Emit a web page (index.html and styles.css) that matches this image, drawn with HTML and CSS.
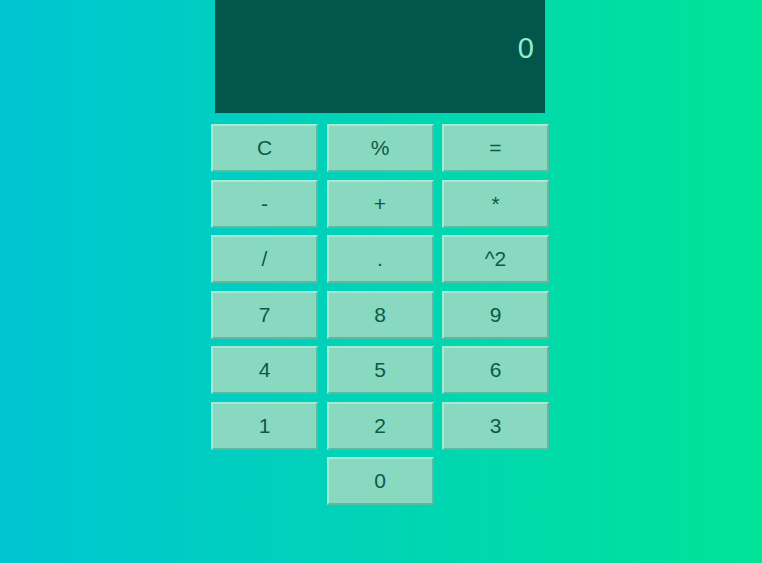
FILE: index.html
```html
<!DOCTYPE html>
<html>
<head>
<meta charset="utf-8">
<link rel="stylesheet" href="styles.css">
</head>
<body>
<div class="calc">
  <div class="display">0</div>
  <div class="keys">
    <button class="key">C</button>
    <button class="key">%</button>
    <button class="key">=</button>
    <button class="key">-</button>
    <button class="key">+</button>
    <button class="key">*</button>
    <button class="key">/</button>
    <button class="key">.</button>
    <button class="key">^2</button>
    <button class="key">7</button>
    <button class="key">8</button>
    <button class="key">9</button>
    <button class="key">4</button>
    <button class="key">5</button>
    <button class="key">6</button>
    <button class="key">1</button>
    <button class="key">2</button>
    <button class="key">3</button>
    <button class="key zero">0</button>
  </div>
</div>
</body>
</html>
```
FILE: styles.css
```css
html, body {
  margin: 0;
  padding: 0;
  height: 100%;
}
body {
  background: linear-gradient(to right, #00c5d2, #00e398);
  font-family: "Liberation Sans", Arial, sans-serif;
}
.calc {
  width: 338px;
  margin-left: calc(50% - 170px);
}
.display {
  margin: 0 4px;
  height: 113px;
  background: #03574a;
  color: #8ff0cf;
  font-size: 29px;
  text-align: right;
  box-sizing: border-box;
  padding: 30px 11px 0 0;
  line-height: 36px;
}
.keys {
  margin-top: 11px;
  display: grid;
  grid-template-columns: repeat(3, 107px);
  column-gap: 8.5px;
  row-gap: 7.5px;
}
.key {
  height: 48px;
  box-sizing: border-box;
  background: #88d9bf;
  border: 2px solid;
  border-color: #a2ecd6 #5fb9a2 #5fb9a2 #a2ecd6;
  color: #0b5a48;
  font-family: "Liberation Sans", Arial, sans-serif;
  font-size: 21px;
  padding: 0;
  cursor: pointer;
}
.zero {
  grid-column: 2;
}
```
